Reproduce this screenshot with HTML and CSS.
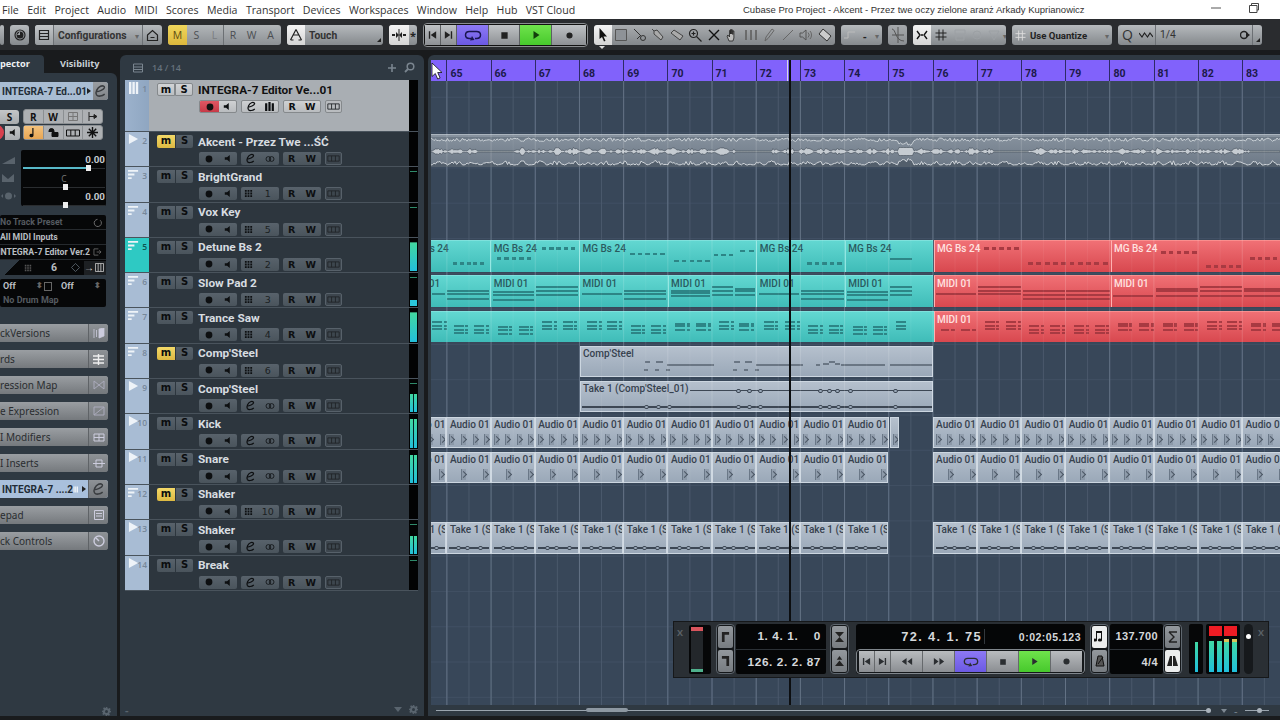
FILE: index.html
```html
<!DOCTYPE html>
<html lang="en">
<head>
<meta charset="utf-8">
<title>Cubase Pro Project</title>
<link rel="stylesheet" href="styles.css">
</head>
<body>
<svg class="defs" width="0" height="0" aria-hidden="true">
  <symbol id="i-rec" viewBox="0 0 10 10"><circle cx="5" cy="5" r="3.4" fill="currentColor"/></symbol>
  <symbol id="i-spk" viewBox="0 0 10 10"><path d="M2 3.5h2.5L7.5 1v8L4.5 6.5H2z" fill="currentColor"/></symbol>
  <symbol id="i-e" viewBox="0 0 10 10"><path d="M1.8 5.6C4 5.4 7.5 4 7.8 2.6 8 1.5 6.4 1 5 1.6 2.8 2.6 1 6 2.2 7.8c1 1.4 3.8 1 5.8-.6" fill="none" stroke="currentColor" stroke-width="1.1"/></symbol>
  <symbol id="i-link" viewBox="0 0 12 10"><circle cx="4" cy="5" r="3" fill="none" stroke="currentColor" stroke-width="1"/><circle cx="8" cy="5" r="3" fill="none" stroke="currentColor" stroke-width="1"/></symbol>
  <symbol id="i-grid" viewBox="0 0 10 10"><path d="M1 1h2v2H1zM4 1h2v2H4zM7 1h2v2H7zM1 4h2v2H1zM4 4h2v2H4zM7 4h2v2H7zM1 7h2v2H1zM4 7h2v2H4zM7 7h2v2H7z" fill="currentColor"/></symbol>
  <symbol id="i-lane" viewBox="0 0 14 8"><path d="M.5 1h13v6H.5zM4.8 1v6M9.2 1v6" fill="none" stroke="currentColor" stroke-width="1"/></symbol>
  <symbol id="i-bars" viewBox="0 0 10 10"><path d="M1 2h2v7H1zM4 1h2v8H4zM7 2h2v7H7z" fill="currentColor"/></symbol>
  <symbol id="i-keys" viewBox="0 0 12 12"><path d="M1 0h2.4v12H1zM4.4 0h2.4v12H4.4zM7.8 0h2.4v12H7.8z" fill="currentColor"/></symbol>
  <symbol id="i-midi" viewBox="0 0 12 12"><path d="M0 1h11v2H0zM0 5h7v2H0zM0 9h4v2H0z" fill="currentColor"/></symbol>
  <symbol id="i-audio" viewBox="0 0 12 12"><path d="M1 0l10 5.500-10 5.500z" fill="currentColor"/></symbol>
  <symbol id="i-gear" viewBox="0 0 12 12"><path d="M5 0h2l.3 1.700 1.400.6L10.200 1.300l1.400 1.400-1 1.500.6 1.400L12 5v2l-1.800.3-.6 1.400 1 1.500-1.400 1.400-1.500-1-1.400.6L7 12H5l-.3-1.800-1.400-.6-1.500 1-1.400-1.400 1-1.500-.6-1.400L0 7V5l1.800-.3.6-1.400-1-1.500L2.800.4l1.500 1 1.400-.6zM6 4a2 2 0 100 4 2 2 0 000-4z" fill="currentColor" fill-rule="evenodd"/></symbol>
  <symbol id="i-loop" viewBox="0 0 18 12"><path d="M7 9.500H5.500C3 9.500 1.500 8 1.500 6S3 2.500 5.500 2.500h7c2.500 0 4 1.500 4 3.500s-1.500 3.500-4 3.500H11" fill="none" stroke="currentColor" stroke-width="1.500"/><path d="M6 11.500l2-4.500 2.500 4z" fill="currentColor"/></symbol>
  <symbol id="i-play" viewBox="0 0 10 10"><path d="M2.500 1l6 4-6 4z" fill="currentColor"/></symbol>
  <symbol id="i-stop" viewBox="0 0 10 10"><path d="M1.500 1.500h7v7h-7z" fill="currentColor"/></symbol>
  <symbol id="i-first" viewBox="0 0 12 10"><path d="M2 1h1.500v8H2zM10 1v8L4 5z" fill="currentColor"/></symbol>
  <symbol id="i-last" viewBox="0 0 12 10"><path d="M8.500 1H10v8H8.500zM2 1v8l6-4z" fill="currentColor"/></symbol>
  <symbol id="i-rew" viewBox="0 0 14 10"><path d="M6.500 1v8L1 5zM13 1v8L7.500 5z" fill="currentColor"/></symbol>
  <symbol id="i-ffw" viewBox="0 0 14 10"><path d="M1 1v8l5.500-4zM7.500 1v8L13 5z" fill="currentColor"/></symbol>
</svg>

<header class="titlebar">
  <nav class="menu"><span>File</span><span>Edit</span><span>Project</span><span>Audio</span><span>MIDI</span><span>Scores</span><span>Media</span><span>Transport</span><span>Devices</span><span>Workspaces</span><span>Window</span><span>Help</span><span>Hub</span><span>VST Cloud</span></nav>
  <div class="doc-title">Cubase Pro Project - Akcent - Przez twe oczy zielone aranż Arkady Kuprianowicz</div>
  <div class="win-ctl">
    <svg width="12" height="12" viewBox="0 0 12 12"><path d="M1 6h10" stroke="#555" fill="none"/></svg>
    <svg width="12" height="12" viewBox="0 0 12 12"><path d="M3.500 3V1.500h7V8H9M1.500 3.500H9v7H1.500z" stroke="#444" fill="none"/></svg>
  </div>
</header>

<section class="toolbar">
  <div class="tg w4"></div>
  <div class="tg w19 ic"><svg width="12" height="12" viewBox="0 0 12 12"><circle cx="6" cy="6" r="5" fill="none" stroke="#222" stroke-width="1.200"/><path d="M6 2.500A3.500 3.500 0 116 9.500 3.500 3.500 0 016 2.500zM6 6v-3.500L3 6z" fill="#222"/></svg></div>
  <div class="tg w127">
    <span class="cell light c19"><svg width="12" height="12" viewBox="0 0 12 12"><path d="M1.500 1.500h9v9h-9zM1.500 4.500h9M1.500 7.500h9" fill="none" stroke="#222" stroke-width="1.200"/></svg></span>
    <span class="tlabel grow">Configurations</span><span class="caret">▾</span>
    <span class="cell c20 sep"><svg width="13" height="13" viewBox="0 0 13 13"><path d="M1.500 6L6.500 1.500 11.500 6v5.500h-10zM4.500 8.500h4" fill="none" stroke="#222" stroke-width="1.200"/></svg></span>
  </div>
  <div class="tg w113 msl">
    <span class="mbtn yel">M</span><span class="mbtn">S</span><span class="mbtn dim">L</span><span class="mbtn sep">R</span><span class="mbtn">W</span><span class="mbtn">A</span>
  </div>
  <div class="tg w96">
    <span class="cell white c18"><svg width="14" height="14" viewBox="0 0 14 14"><path d="M7 1.500L12.500 12M1.500 12L7 1.500M4 7h6M1.500 12h3M9.500 12h3" fill="none" stroke="#222" stroke-width="1.200"/></svg></span>
    <span class="tlabel grow">Touch</span><span class="corner"></span>
  </div>
  <div class="tg w28">
    <span class="cell white c20"><svg width="14" height="12" viewBox="0 0 14 12"><path d="M0 5h3v2H0zM11 5h3v2h-3zM4 3l3 3-3 3zM10 3L7 6l3 3z" fill="#222"/><path d="M7 0v12" stroke="#222"/></svg></span>
    <span class="star">*</span>
  </div>
  <div class="tg w165 tport">
    <span class="tp w16"><svg width="11" height="10"><use href="#i-first"/></svg></span>
    <span class="tp w16"><svg width="11" height="10"><use href="#i-last"/></svg></span>
    <span class="tp w32 purple"><svg width="18" height="12"><use href="#i-loop"/></svg></span>
    <span class="tp w31"><svg width="9" height="9"><use href="#i-stop"/></svg></span>
    <span class="tp w32 green"><svg width="10" height="10"><use href="#i-play"/></svg></span>
    <span class="tp grow"><svg width="9" height="9"><use href="#i-rec"/></svg></span>
  </div>
  <div class="tools-wrap">
    <div class="tg w241 tools">
      <span class="tool white wsel"><svg width="10" height="14" viewBox="0 0 10 14"><path d="M1.500 0v11l2.500-2 2 4.500 1.500-.7L5.500 8.500H9z" fill="#111"/></svg></span>
      <span class="tool"><svg width="14" height="14" viewBox="0 0 14 14"><path d="M1.500 1.500h11v11h-11z" fill="#8e9297" stroke="#555"/></svg></span>
      <span class="tool"><svg width="14" height="14" viewBox="0 0 14 14"><path d="M1 1l7 7M4 11L8 7" stroke="#333" fill="none"/><circle cx="10" cy="10" r="2.500" fill="none" stroke="#333"/></svg></span>
      <span class="tool"><svg width="14" height="14" viewBox="0 0 14 14"><path d="M1 1l2 2M3 3l3-1 6 7-2 3-7-6z" fill="#aaa" stroke="#444"/></svg></span>
      <span class="tool"><svg width="14" height="14" viewBox="0 0 14 14"><path d="M1 5l3-3 9 6-3 4z" fill="#aaa" stroke="#444"/></svg></span>
      <span class="tool"><svg width="14" height="14" viewBox="0 0 14 14"><circle cx="5.500" cy="5.500" r="4" fill="none" stroke="#222" stroke-width="1.200"/><path d="M8.500 8.500l5 5M3.500 5.500h4M5.500 3.500v4" stroke="#222" stroke-width="1.200" fill="none"/></svg></span>
      <span class="tool"><svg width="12" height="12" viewBox="0 0 12 12"><path d="M1 1l10 10M11 1L1 11" stroke="#111" stroke-width="1.400" fill="none"/></svg></span>
      <span class="tool"><svg width="14" height="14" viewBox="0 0 14 14"><path d="M4 13L2 8l1-1 1.500 2V2.500l1 0V6V1.500l1.200 0V6l0-4h1.100v4.500V3h1.100v6l0 1-1 3z" fill="#bbb" stroke="#222" stroke-width=".8"/></svg></span>
      <span class="tool"><svg width="14" height="12" viewBox="0 0 14 12"><path d="M2 1v10M7 1v10M12 1v10" stroke="#666" stroke-width="1.800"/></svg></span>
      <span class="tool"><svg width="12" height="14" viewBox="0 0 12 14"><path d="M2 13l1-4 6-8 2 1.500-6 8z" fill="none" stroke="#666"/></svg></span>
      <span class="tool"><svg width="12" height="12" viewBox="0 0 12 12"><path d="M1 11L11 1" stroke="#666" fill="none"/></svg></span>
      <span class="tool"><svg width="14" height="12" viewBox="0 0 14 12"><path d="M1 4h2.500L7 1v10L3.500 8H1z" fill="none" stroke="#555"/><path d="M9 3.500a3.500 3.500 0 010 5M11 2a6 6 0 010 8" stroke="#666" fill="none"/></svg></span>
      <span class="tool"><svg width="14" height="14" viewBox="0 0 14 14"><path d="M1 6l4-5 8 7-4 5z" fill="#ccc" stroke="#333"/></svg></span>
    </div>
    <span class="sel-tri"></span>
  </div>
  <div class="tg w41 dimgrp"><svg width="14" height="10" viewBox="0 0 14 10"><path d="M0 8h4V2h7" stroke="#bbb" fill="none"/></svg><span class="dash">-</span><span class="caret">▾</span></div>
  <div class="tg w19 ic lite"><svg width="14" height="18" viewBox="0 0 14 18"><path d="M1 3c4 0 3 12 12 12M1 9h12M7 1v16" stroke="#555" fill="none"/></svg></div>
  <div class="tg w93 snap">
    <span class="cell white c18"><svg width="12" height="10" viewBox="0 0 12 10"><path d="M1 1l3 4-3 4M11 1L8 5l3 4M5 5h2" stroke="#111" stroke-width="1.400" fill="none"/></svg></span>
    <span class="cell c20"><svg width="12" height="12" viewBox="0 0 12 12"><path d="M4 .5v11M8 .5v11M.5 4h11M.5 8h11" stroke="#222" fill="none"/></svg></span>
    <span class="cell c17 faint"><svg width="12" height="12" viewBox="0 0 12 12"><path d="M1 1h10v4H1zM2 7h8v4H2z" stroke="#9ca0a4" fill="none"/></svg></span>
    <span class="cell c17 faint"><svg width="12" height="12" viewBox="0 0 12 12"><circle cx="6" cy="6" r="4" stroke="#9ca0a4" fill="none"/></svg></span>
    <span class="cell c17 faint"><svg width="12" height="12" viewBox="0 0 12 12"><path d="M1 2h10L6 11z" stroke="#9ca0a4" fill="none"/></svg></span>
    <span class="caret">▾</span>
  </div>
  <div class="tg w100 quant">
    <span class="cell c17"><svg width="11" height="11" viewBox="0 0 12 12"><path d="M4 .5v11M8 .5v11M.5 4h11M.5 8h11" stroke="#ddd" fill="none"/></svg></span>
    <span class="tlabel grow dark">Use Quantize</span><span class="caret">▾</span>
  </div>
  <div class="tg quant2">
    <span class="qq">Q</span>
    <svg class="qwave" width="14" height="8" viewBox="0 0 14 8"><path d="M0 2l3 4 2.500-4 3 4 2.500-4L14 6" stroke="#222" stroke-width="1.200" fill="none"/></svg>
    <span class="tlabel grow q14">1/4</span>
    <svg width="10" height="10" viewBox="0 0 10 10"><circle cx="4" cy="5" r="3.500" fill="none" stroke="#222" stroke-width="1.400"/><path d="M6 2l4 3-4 3z" fill="#222"/></svg>
    <span class="qcorner"><span class="corner"></span></span>
  </div>
</section>

<main class="main">
  <aside class="inspector">
    <div class="tabs"><span class="tab active">pector</span><span class="tab">Visibility</span></div>
    <div class="ins-body">
      <div class="ins-head"><span class="ins-title">INTEGRA-7 Ed...01</span><span class="tri-r"></span><span class="ins-e"><svg width="15" height="14"><use href="#i-e"/></svg></span></div>
      <div class="ins-row r1">
        <span class="ibtn s-btn">S</span>
        <span class="igroup"><span class="ib">R</span><span class="ib">W</span><span class="ib mute"><svg width="10" height="9" viewBox="0 0 10 9"><path d="M.5.5h9v8h-9zM5 .5v8M.5 4.500h9" stroke="#777" fill="none"/></svg></span><span class="ib"><svg width="10" height="9" viewBox="0 0 10 9"><path d="M1 0v9M1 4.500h5M6 2.500l3 2-3 2z" stroke="#222" fill="#222"/></svg></span></span>
      </div>
      <div class="ins-row r2">
        <span class="ired"></span>
        <span class="ibtn spk"><svg width="9" height="9"><use href="#i-spk"/></svg></span>
        <span class="igroup"><span class="ib or"><svg width="10" height="11" viewBox="0 0 10 11"><path d="M5.500 1v7.500a2 1.700 0 11-1.200-1.500V1z" fill="#111"/></svg></span><span class="ib"><svg width="11" height="9" viewBox="0 0 11 9"><path d="M1 4V3a2.500 2.500 0 015 0v1M4 4.500h6v4H4z" stroke="#111" fill="#111"/></svg></span><span class="ib"><svg width="14" height="8"><use href="#i-lane"/></svg></span><span class="ib"><svg width="11" height="11" viewBox="0 0 11 11"><path d="M5.500 0v11M0 5.500h11M1.800 1.800l7.400 7.400M9.200 1.800L1.800 9.200" stroke="#111" stroke-width="1.400"/></svg></span></span>
      </div>
      <div class="ins-mix">
        <div class="mix-side">
          <svg width="15" height="8" viewBox="0 0 15 8"><path d="M1 8L14 1v7z" fill="#59636c"/></svg>
          <svg width="15" height="8" viewBox="0 0 15 8"><path d="M1 0l6 5 6-5v8H1z" fill="#59636c"/></svg>
          <svg width="15" height="8" viewBox="0 0 15 8"><circle cx="7.500" cy="4" r="3.500" fill="#59636c"/><path d="M0 4l2-2v4zM15 4l-2-2v4z" fill="#59636c"/></svg>
        </div>
        <div class="mix-box">
          <div class="mix-val">0.00</div>
          <div class="slider"><span class="fill"></span><span class="handle h-a"></span></div>
          <div class="mix-c">C</div>
          <div class="slider s-mid"><span class="handle h-c"></span></div>
          <div class="mix-val">0.00</div>
          <div class="slider"><span class="handle h-c"></span></div>
        </div>
      </div>
      <div class="preset">
        <div class="p-line dimtxt">No Track Preset<svg width="9" height="9" viewBox="0 0 10 10"><path d="M8 2.500a4 4 0 11-3-1" stroke="#777" fill="none"/></svg></div>
        <div class="p-line">All MIDI Inputs</div>
        <div class="p-line cutl">INTEGRA-7 Editor Ver.2<svg width="9" height="8" viewBox="0 0 10 9"><path d="M6 1H1v7h5M4 4.500h5M7 2.500l2 2-2 2" stroke="#666" fill="none"/></svg></div>
        <div class="p-chan">
          <svg class="pc-g" width="8" height="8"><use href="#i-grid"/></svg><span class="pc-n">6</span><svg width="9" height="9" viewBox="0 0 10 10"><path d="M5 .5L9.500 5 5 9.500.500 5z" stroke="#59636c" fill="none"/></svg>
          <span class="pc-k">→<svg width="9" height="9" viewBox="0 0 10 10"><path d="M.5.5h9v9h-9zM3.500.5v9M6.500.5v9" stroke="#bbb" fill="none"/></svg></span>
        </div>
      </div>
      <div class="drum">
        <div class="d-line"><span class="off">Off</span><span class="updn">⬍</span><span class="dicon"></span><span class="off o2">Off</span><span class="updn">⬍</span></div>
        <div class="d-line dimtxt">No Drum Map</div>
      </div>
      <div class="sections">
        <div class="sec"><span class="sec-t">ckVersions</span><span class="sec-i"><svg width="12" height="11" viewBox="0 0 12 11"><path d="M1 1v9M3.500 2v7M6 1v9l5-2V0z" stroke="#ccd" fill="#ccd" stroke-width=".8"/></svg></span></div>
        <div class="sec"><span class="sec-t">rds</span><span class="sec-i"><svg width="11" height="11" viewBox="0 0 11 11"><path d="M0 2h11M0 5.500h11M0 9h11M5.500 0v11" stroke="#eee" stroke-width="1.400"/></svg></span></div>
        <div class="sec"><span class="sec-t">ression Map</span><span class="sec-i"><svg width="12" height="10" viewBox="0 0 12 10"><path d="M1 1l5 4-5 4zM11 1L6 5l5 4z" stroke="#aab" fill="none"/></svg></span></div>
        <div class="sec"><span class="sec-t">e Expression</span><span class="sec-i"><svg width="12" height="10" viewBox="0 0 12 10"><path d="M1 1h10v8H1zM1 9l10-8" stroke="#aab" fill="none"/></svg></span></div>
        <div class="sec"><span class="sec-t">I Modifiers</span><span class="sec-i"><svg width="12" height="9" viewBox="0 0 12 9"><path d="M1 1h10v7H1zM1 4.500h10M6 1v7" stroke="#ccd" fill="none"/></svg></span></div>
        <div class="sec"><span class="sec-t">I Inserts</span><span class="sec-i"><svg width="12" height="9" viewBox="0 0 12 9"><path d="M3 1h6v7H3zM0 4.500h12" stroke="#ccd" fill="none"/></svg></span></div>
        <div class="sec inst"><span class="sec-t">INTEGRA-7 ....2</span><svg class="kbd" width="8" height="11"><use href="#i-keys"/></svg><span class="tri-r"></span><span class="sec-i"><svg width="15" height="14"><use href="#i-e"/></svg></span></div>
        <div class="sec"><span class="sec-t">epad</span><span class="sec-i"><svg width="10" height="10" viewBox="0 0 10 10"><path d="M.5.5h9v9h-9zM2 3.500h6M2 6h6" stroke="#ccd" fill="none"/></svg></span></div>
        <div class="sec"><span class="sec-t">ck Controls</span><span class="sec-i"><svg width="12" height="12" viewBox="0 0 12 12"><circle cx="6" cy="6" r="5" stroke="#ccd" stroke-width="1.400" fill="none"/><path d="M3 3l3 3" stroke="#ccd" stroke-width="1.400"/></svg></span></div>
      </div>
      <svg class="gear g1" width="9" height="9"><use href="#i-gear"/></svg>
    </div>
  </aside>

  <section class="tracklist">
    <div class="tl-head">
      <svg width="10" height="10" viewBox="0 0 10 10"><path d="M.5 1h9v8h-9zM.5 4h9M.5 6.500h9" fill="none" stroke="#7a858f"/></svg>
      <span class="tl-count">14 / 14</span>
      <svg class="tl-plus" width="8" height="8" viewBox="0 0 8 8"><path d="M4 0v8M0 4h8" stroke="#7a858f" stroke-width="1.600"/></svg>
      <svg width="11" height="11" viewBox="0 0 11 11"><circle cx="6.500" cy="4.500" r="3.300" fill="none" stroke="#7a858f" stroke-width="1.500"/><path d="M4 7L1 10" stroke="#7a858f" stroke-width="1.800"/></svg>
    </div>
    <div class="tracks" id="tracks"></div>
    <div class="tl-foot"><span class="tl-dash">-</span><span class="tl-tri"></span><svg width="9" height="9"><use href="#i-gear"/></svg></div>
  </section>

  <section class="arrange">
    <div class="ruler" id="ruler"></div>
    <div class="lanes" id="lanes">
      <div class="grid-over"></div>
    </div>
    <div class="hscroll"><span class="sc-line"></span><span class="sc-thumb"></span><span class="sc-dot d1"></span><span class="sc-tri"></span><span class="sc-dash">-</span><span class="sc-line l2"></span><span class="sc-dot d2"></span></div>
    <div class="cursor"></div>
    <svg class="mouse" width="12" height="18" viewBox="0 0 12 18"><path d="M1 1v13.500l3.300-3 2.400 5.500 2.400-1-2.400-5.500H11z" fill="#fff" stroke="#111" stroke-width=".8"/></svg>
  </section>
</main>

<div class="transport">
  <span class="tx">X</span>
  <div class="t-meter"><span class="tm-red"></span><span class="tm-green"></span></div>
  <div class="t-stack s1"><span class="tb"><svg width="9" height="10" viewBox="0 0 10 11"><path d="M1 0h8v3H4v8H1z" fill="#222"/></svg></span><span class="tb"><svg width="9" height="10" viewBox="0 0 10 11"><path d="M1 0h8v11H6V3H1z" fill="#222"/></svg></span></div>
  <div class="t-disp d-loc"><div class="t-line">1. 4. 1.&nbsp;&nbsp;&nbsp;&nbsp;0</div><div class="t-line">126. 2. 2. 87</div></div>
  <div class="t-stack s2"><span class="tb"><svg width="9" height="10" viewBox="0 0 10 11"><path d="M0 0h10L5 5.500 10 11H0l5-5.500z" fill="#222"/></svg></span><span class="tb"><svg width="9" height="10" viewBox="0 0 10 11"><path d="M5 0l3 4H2zM0 11l5-6 5 6z" fill="#222"/></svg></span></div>
  <div class="t-main">
    <div class="t-top"><span class="t-pos">72. 4. 1. 75</span><span class="t-time">0:02:05.123</span></div>
    <div class="t-btns">
      <span class="tbt b16"><svg width="11" height="9"><use href="#i-first"/></svg></span>
      <span class="tbt b16"><svg width="11" height="9"><use href="#i-last"/></svg></span>
      <span class="tbt b32"><svg width="12" height="9"><use href="#i-rew"/></svg></span>
      <span class="tbt b32"><svg width="12" height="9"><use href="#i-ffw"/></svg></span>
      <span class="tbt b32 purple"><svg width="16" height="11"><use href="#i-loop"/></svg></span>
      <span class="tbt b32"><svg width="8" height="8"><use href="#i-stop"/></svg></span>
      <span class="tbt b32 green"><svg width="9" height="9"><use href="#i-play"/></svg></span>
      <span class="tbt b32"><svg width="9" height="9"><use href="#i-rec"/></svg></span>
    </div>
  </div>
  <div class="t-stack s3"><span class="tb on"><svg width="11" height="14" viewBox="0 0 11 14"><path d="M3 1v9a2 1.500 0 11-1-1.200V1zM8 1v9a2 1.500 0 11-1-1.200V1zM3 1h5v2H3z" fill="#111"/></svg></span><span class="tb"><svg width="10" height="12" viewBox="0 0 10 12"><path d="M3 1h4l2 10H1zM3 9l5-7" stroke="#111" fill="#555"/></svg></span></div>
  <div class="t-disp d-tempo"><div class="t-line">137.700</div><div class="t-line">4/4</div></div>
  <div class="t-stack s4"><span class="tb"><svg width="10" height="12" viewBox="0 0 10 12"><path d="M1 1h8M1 11h8M1 1l5 5-5 5" stroke="#222" stroke-width="1.400" fill="none"/></svg></span><span class="tb on"><svg width="11" height="10" viewBox="0 0 11 10"><path d="M3 0h5l3 10H0z" fill="#222"/><path d="M5.500 0v10" stroke="#eee"/></svg></span></div>
  <div class="t-m2"><span class="bar"></span></div>
  <div class="t-m3">
    <div class="m3-ch"><span class="m3-red"></span><span class="m3-bars"><i></i><i></i></span></div>
    <div class="m3-ch"><span class="m3-red"></span><span class="m3-bars hi"><i></i><i></i></span></div>
  </div>
  <div class="t-knob"><span></span></div>
  <span class="tx x2">X</span>
</div>
<script src="script.js"></script>
</body>
</html>
```
FILE: styles.css
```css
* { box-sizing: border-box; }
html, body { margin: 0; padding: 0; }
body {
  width: 1280px; height: 720px; overflow: hidden; position: relative;
  background: #191b1d; font-family: "Open Sans", "Noto Sans", sans-serif; font-size: 11px; color: #222;
}
.defs { position: absolute; }
.grow { flex: 1; }

/* title bar */
.titlebar { height: 19px; background: #fff; position: relative; display: flex; align-items: center; }
.menu { display: flex; padding-left: 2px; font-size: 10.6px; color: #333; }
.menu span { margin-right: 8.400px; white-space: nowrap; }
.doc-title { position: absolute; left: 743px; top: 3px; font-family: "Liberation Sans", sans-serif; font-size: 9.500px; line-height: 13px; color: #333; white-space: nowrap; }
.win-ctl { position: absolute; left: 1210px; top: 2px; display: flex; gap: 26px; }

/* toolbar */
.toolbar { height: 31px; background: #2a2c2f; display: flex; gap: 6px; align-items: center; padding-top: 1px; }
.tg { height: 20px; display: flex; align-items: center; border-radius: 3px; background: linear-gradient(#b6babd, #85898d); flex: none; overflow: hidden; }
.ic { justify-content: center; }
.w4 { width: 4px; } .w19 { width: 19px; } .w127 { width: 127px; } .w113 { width: 113px; } .w96 { width: 96px; }
.w28 { width: 28px; } .w165 { width: 165px; } .w241 { width: 241px; } .w41 { width: 41px; } .w93 { width: 93px; } .w100 { width: 100px; }
.cell { height: 100%; display: flex; align-items: center; justify-content: center; flex: none; }
.c17 { width: 17px; } .c18 { width: 18px; } .c19 { width: 19px; } .c20 { width: 20px; }
.sep { border-left: 1px solid #6c7074; }
.light { background: linear-gradient(#c4c7ca, #999da0); border-right: 1px solid #6c7074; }
.white { background: linear-gradient(#f4f4f4, #d4d4d4); }
.tlabel { font-family: Roboto, sans-serif; font-weight: 700; font-size: 10.300px; padding-left: 4px; color: #333; white-space: nowrap; }
.tlabel.dark { color: #222; font-size: 9.600px; padding-left: 1px; }
.caret { font-size: 8px; color: #666; padding: 0 3px; }
.corner { width: 0; height: 0; border-style: solid; border-width: 0 0 4px 4px; border-color: transparent transparent #222 transparent; align-self: flex-end; margin: 0 2px 3px 0; }
.star { flex: 1; text-align: center; font-size: 11px; font-weight: 700; color: #222; }
.msl { background: linear-gradient(#b2b6b9, #8c9094); }
.mbtn { width: 19px; height: 100%; text-align: center; line-height: 20px; font-size: 10.5px; color: #4b4e52; flex: none; }
.mbtn.yel { background: linear-gradient(#f0d65c, #dcb73c); color: #5c4a10; }
.mbtn.dim { color: #7a7d80; width: 17px; }
.tport { height: 24px; background: #111; border: 1px solid #8a8d90; border-radius: 4px; padding: 1px; gap: 0; }
.tp { height: 100%; display: flex; align-items: center; justify-content: center; flex: none; background: linear-gradient(#bfc2c5, #8d9094); color: #222; border-right: 1px solid #5c5f62; }
.tp.grow { flex: 1; border-right: 0; }
.w16 { width: 16px; } .w31 { width: 31px; } .w32 { width: 32px; }
.purple { background: linear-gradient(#8d79f5, #6b59e3) !important; color: #1a1650; }
.green { background: linear-gradient(#6fe34c, #47c92c) !important; color: #123f0c; }
.tools-wrap { position: relative; flex: none; }
.sel-tri { position: absolute; left: 5px; top: 21px; border-style: solid; border-width: 3px 3px 0 3px; border-color: #ddd transparent transparent transparent; }
.tools { background: linear-gradient(#a9acaf, #83878b); }
.tool { width: 18.500px; height: 100%; display: flex; align-items: center; justify-content: center; flex: none; }
.tool.wsel { width: 18px; border-radius: 3px 0 0 3px; }
.dimgrp { gap: 5px; padding-left: 3px; }
.dash { font-weight: 700; color: #222; }
.lite { background: linear-gradient(#a6a9ac, #8a8d91); }
.snap .caret { padding: 0 1px; }
.quant .c17 { background: transparent; }
.quant2 { width: 144px; padding-left: 4px; }
.qq { font-size: 14px; color: #333; line-height: 20px; width: 17px; }
.qwave { margin-right: 2px; }
.q14 { padding-left: 4px; color: #333; font-weight: 400; border-left: 1px solid #6c7074; height: 100%; line-height: 20px; }
.qcorner { width: 10px; height: 100%; margin-left: 2px; border-left: 1px solid #6c7074; display: flex; justify-content: flex-end; }

/* main panels */
.main { height: 670px; display: flex; padding-top: 5px; position: relative; }

/* inspector */
.inspector { width: 117px; flex: none; display: flex; flex-direction: column; position: relative; }
.tabs { display: flex; height: 18px; font-weight: 700; font-size: 9.200px; color: #c9d0d6; line-height: 18px; }
.tab.active { width: 44px; background: #2f3942; color: #eef1f3; border-radius: 0 4px 0 0; }
.tab + .tab { margin-left: 16px; }
.ins-body { flex: 1; background: #2f3942; border-radius: 0 6px 0 0; position: relative; padding-top: 9px; height: 643px; margin-bottom: 4px; }
.ins-head { width: 108px; height: 18px; display: flex; align-items: center; background: #a9bdd3; border-radius: 0 3px 3px 0; position: relative; }
.ins-title { font-family: Roboto, sans-serif; font-weight: 700; font-size: 10px; color: #222c36; padding-left: 2px; flex: 1; white-space: nowrap; }
.tri-r { width: 0; height: 0; border-style: solid; border-width: 3px 0 3px 4px; border-color: transparent transparent transparent #222; margin-right: 2px; }
.ins-e { width: 20px; height: 100%; background: linear-gradient(#9a9ea2, #7e8286); display: flex; align-items: center; justify-content: center; color: #3a3d40; border-radius: 0 3px 3px 0; }
.ins-row { display: flex; height: 15px; margin-top: 1px; align-items: center; width: 108px; position: relative; }
.r1 { margin-top: 9px; }
.ibtn { height: 14px; width: 19px; background: linear-gradient(#c4c6c8, #a8abae); border-radius: 0 3px 3px 0; display: flex; align-items: center; justify-content: center; font-weight: 700; color: #111; font-size: 10px; }
.s-btn { margin-right: 4px; }
.spk { width: 15px; margin-left: 5px; margin-right: 3px; }
.ired { position: absolute; left: -4px; top: 0; width: 8px; height: 15px; background: #d8404e; border-radius: 0 8px 8px 0; }
.igroup { width: 80px; height: 15px; background: #adb0b3; border: 1px solid #8b8f92; border-radius: 3px; display: flex; }
.ib { flex: 1; display: flex; align-items: center; justify-content: center; font-size: 10px; font-weight: 700; color: #111; border-right: 1px solid #8b8f92; }
.ib:last-child { border-right: 0; }
.ib.or { background: linear-gradient(#f4c27c, #e7a654); }
.ins-mix { display: flex; margin-top: 10px; height: 56px; }
.mix-side { width: 21px; flex: none; display: flex; flex-direction: column; padding: 6px 0 0 1px; gap: 10px; }
.mix-box { width: 85px; background: #060708; border-radius: 2px; padding: 5px 1px 0 2px; }
.mix-val { height: 10px; line-height: 10px; text-align: right; font-family: Roboto, sans-serif; font-size: 9.800px; font-weight: 700; color: #c4c9cd; }
.mix-c { height: 10px; line-height: 10px; text-align: center; font-size: 8.500px; color: #777; }
.slider { height: 9px; position: relative; }
.s-mid { height: 8px; }
.slider::before { content: ""; position: absolute; left: 0; right: 0; top: 3px; height: 1px; background: #2a2d30; }
.fill { position: absolute; left: 0; top: 2px; height: 2px; width: 64px; background: #58b9c9; }
.handle { position: absolute; top: 0; width: 5px; height: 6px; background: #eee; }
.h-a { left: 63px; } .h-c { left: 40px; }
.preset { width: 106px; height: 60px; background: #060708; border-radius: 2px; margin-top: 9px; font-family: Roboto, sans-serif; font-size: 8.700px; font-weight: 700; color: #b9bec2; position: relative; }
.p-line { height: 15px; line-height: 14px; display: flex; justify-content: space-between; align-items: center; padding: 0 4px 0 0; border-bottom: 1px solid #262a2e; white-space: nowrap; }
.dimtxt { color: #555b61; }
.cutl { margin-left: -2px; }
.p-chan { height: 15px; display: flex; align-items: center; padding-left: 24px; background: linear-gradient(135deg, #2f3942 0 14px, #060708 14px); color: #b9bec2; font-size: 10.500px; }
.pc-g { margin-right: 19px; color: #555; }
.pc-n { margin-right: 14px; }
.pc-k { margin-left: auto; width: 22px; display: flex; align-items: center; gap: 1px; background: #1d2023; color: #ddd; height: 14px; font-size: 10px; }
.drum { width: 106px; height: 28px; background: #060708; border-radius: 2px; margin-top: 4px; font-family: Roboto, sans-serif; font-size: 9px; font-weight: 700; color: #b9bec2; }
.d-line { height: 14px; line-height: 14px; display: flex; align-items: center; padding-left: 3px; white-space: nowrap; }
.off { width: 33px; }
.o2 { width: 33px; margin-left: 9px; }
.updn { font-size: 8px; color: #666; width: 7px; }
.dicon { width: 8px; height: 9px; border: 1px solid #666; margin-left: 1px; }
.sections { margin-top: 17px; display: flex; flex-direction: column; gap: 8px; }
.sec { width: 108px; height: 18px; display: flex; align-items: center; background: linear-gradient(#9a9ea2, #75797d); border-radius: 0 3px 3px 0; overflow: hidden; }
.sec-t { flex: 1; font-size: 10px; color: #2a2d30; white-space: nowrap; font-family: "Noto Sans", sans-serif; }
.sec-i { width: 20px; height: 100%; flex: none; display: flex; align-items: center; justify-content: center; border-left: 1px solid #5f6367; background: linear-gradient(#8e9296, #74787c); color: #3a3d40; }
.sec.inst { background: #a9c0dc; }
.inst .sec-t { font-family: Roboto, sans-serif; font-weight: 700; color: #222c36; padding-left: 2px; }
.kbd { color: #eef3f8; margin-right: 3px; }
.gear { position: absolute; color: #59646e; }
.g1 { left: 102px; bottom: 0; }

/* track list */
.tracklist { width: 304px; margin-left: 3px; flex: none; background: #2f3942; border-radius: 6px 6px 0 0; margin-bottom: 4px; display: flex; flex-direction: column; padding: 0 5px; position: relative; height: 661px; }
.tl-head { height: 25px; display: flex; align-items: center; padding: 0 4px 0 8px; flex: none; }
.tl-count { font-size: 9px; color: #66727c; font-weight: 600; margin-left: 9px; flex: 1; }
.tl-plus { margin-right: 8px; }
.tracks { display: flex; flex-direction: column; width: 293px; }
.track { height: 35.300px; display: flex; flex: none; background: #2d363e; border-bottom: 1px solid #49535c; }
.track.sel { height: 52px; background: #a9aeb3; }
.strip { width: 24px; flex: none; background: #a8bcd4; position: relative; }
.sel .strip { background: linear-gradient(90deg, #9cb2cc, #8fa6c1); }
.strip.cy { background: #2ec9c3; }
.strip svg { position: absolute; left: 3px; top: 2px; color: #eef3f8; }
.num { position: absolute; right: 2px; top: 3px; font-size: 8.500px; color: #76879a; font-weight: 600; }
.strip.cy .num { color: #0c5552; }
.tbody { flex: 1; position: relative; padding-top: 3px; }
.r-a { display: flex; height: 13px; padding-left: 8px; align-items: center; }
.ms { width: 18px; height: 13px; background: linear-gradient(#58626b, #4a545c); color: #0b0d0f; text-align: center; font-weight: 700; font-size: 10px; line-height: 12px; border-radius: 2px 0 0 2px; font-family: "DejaVu Sans", sans-serif; }
.ms + .ms { border-radius: 0 2px 2px 0; border-left: 1px solid #2d363e; }
.ms.yel { background: linear-gradient(#f3d968, #ddb942); }
.name { margin-left: 5px; font-family: Roboto, sans-serif; font-weight: 700; font-size: 11.800px; color: #d7dce0; white-space: nowrap; }
.r-b { display: flex; padding-left: 50px; margin-top: 4px; height: 13px; gap: 4px; }
.g { height: 13px; background: linear-gradient(#58626b, #4a545c); border-radius: 2px; display: flex; align-items: center; justify-content: space-around; color: #0d0f11; font-weight: 700; font-size: 9.500px; width: 38px; flex: none; font-family: "DejaVu Sans", sans-serif; }
.g.lane { width: 17px; color: #202427; background: #3d464e; border: 1px solid #57616a; }
.g .n { color: #1b1f22; font-weight: 400; font-size: 9.500px; width: 16px; text-align: center; }
.sel .ms { background: linear-gradient(#d2d4d6, #bcbfc2); border: 1px solid #85898c; }
.sel .name { color: #111; }
.sel .g { background: linear-gradient(#cfd1d3, #b9bcbf); border: 1px solid #85898c; }
.sel .g.lane { background: #b9bcbf; }
.sel .g.rr { position: relative; overflow: hidden; justify-content: flex-end; padding-right: 5px; }
.sel .g.rr::before { content: ""; position: absolute; left: 0; top: 0; bottom: 0; width: 19px; background: linear-gradient(#e05763, #c73a48); }
.sel .g.rr svg:first-child { position: absolute; left: 5px; top: 1px; color: #111; }
.meter { width: 9px; flex: none; background: #020303; position: relative; }
.mt-tick { position: absolute; left: 1px; right: 1px; top: 4px; height: 1px; background: #2f8a6a; }
.mt-fill { position: absolute; left: 1px; right: 1px; bottom: 1px; background: linear-gradient(#42d8a0, #22bfdb); }
.mt-fill.full { top: 5px; }
.mt-fill.small { height: 6px; background: #2bc8dc; }
.mt-fill.half { height: 18px; }
.mt-fill.dbl::after { content: ""; position: absolute; left: 3px; width: 1px; top: 0; bottom: 0; background: #042024; }
.tl-foot { position: absolute; left: 5px; right: 6px; bottom: 1px; height: 12px; display: flex; align-items: center; gap: 7px; color: #59646e; }
.tl-dash { flex: 1; font-weight: 700; }
.tl-tri { width: 0; height: 0; border-style: solid; border-width: 5px 4px 0 4px; border-color: #59646e transparent transparent transparent; }

/* arrange */
.arrange { flex: 1; margin-left: 4px; background: #2f3942; border-radius: 6px 0 0 0; padding: 5px 0 0 3px; display: flex; flex-direction: column; position: relative; overflow: hidden; margin-bottom: 4px; }
.ruler { height: 21px; background: #8162fb; position: relative; flex: none; overflow: hidden; }
.bar-l { position: absolute; top: 0; bottom: 0; width: 1px; background: #2e2a66; }
.bar-n { position: absolute; top: 7px; font-family: Roboto, sans-serif; font-size: 10.500px; font-weight: 700; color: #1c1a4a; }
.lanes {
  flex: 1; position: relative; overflow: hidden; background-color: #384759;
  background-image: linear-gradient(90deg, #485a70 1px, transparent 1px), linear-gradient(90deg, #404f63 1px, transparent 1px), linear-gradient(#404f63 1px, transparent 1px);
  background-size: 44.200px 100%, 22.100px 100%, 100% 35.300px;
  background-position: 15.400px 0, 15.400px 0, 0 15.800px;
}
.grid-over {
  position: absolute; inset: 0; z-index: 5;
  background-image: linear-gradient(90deg, rgba(255,255,255,.1) 1px, transparent 1px), linear-gradient(90deg, rgba(255,255,255,.05) 1px, transparent 1px);
  background-size: 44.200px 100%, 22.100px 100%;
  background-position: 15.400px 0, 15.400px 0;
}
.ev { position: absolute; overflow: hidden; }
.ev-t { position: absolute; left: 2.500px; top: 2px; font-family: Roboto, sans-serif; font-size: 10px; font-weight: 500; white-space: nowrap; z-index: 2; }
.ev.teal { background: linear-gradient(#62d7d1, #3fbcb8); border-left: 1px solid #8fe6e1; border-top: 1px solid #7ee1dc; }
.teal .ev-t { color: #2a5a5e; }
.ev.red { background: linear-gradient(#f07075, #d8484f); border-left: 1px solid #ffb1b1; border-top: 1px solid #f98e8e; }
.red .ev-t { color: #ffe2e0; }
.ev.gray { background: linear-gradient(#b5c0cd, #9aa8b8); border: 1px solid #ccd6e0; }
.gray .ev-t { color: #36414e; top: 1px; }
.ev.wave { background: linear-gradient(#87929e, #6c7886); border-top: 1px solid #aab4be; }
.ev svg { position: absolute; left: 0; top: 0; }
.nt { position: absolute; z-index: 1; }
.teal .nt { background: #2d8586; }
.red .nt { background: #a83a42; }
.gray .nt { background: #6a7684; }
.ln { position: absolute; background: #3d4754; height: 1px; }
.dm { position: absolute; width: 5px; height: 4px; border: 1px solid #3d4754; border-radius: 2px; background: #9aa8b8; }
.mk { position: absolute; background: rgba(86,100,116,.25); border-left: 1px solid rgba(70,84,100,.5); }
.mk::after { content: ""; position: absolute; left: -1px; top: 3px; width: 4px; height: 4px; border-top: 1px solid #4a5664; border-right: 1px solid #4a5664; transform: rotate(45deg); }
.hscroll { height: 11px; flex: none; position: relative; background: #2f3942; }
.sc-line { position: absolute; left: 5px; right: 72px; top: 5px; height: 1px; background: #9aa5af; }
.sc-line.l2 { left: 814px; right: 11px; }
.sc-thumb { position: absolute; left: 155px; width: 42px; top: 3px; height: 4px; background: #8d98a2; border-radius: 2px; }
.sc-dot { position: absolute; top: 3px; width: 5px; height: 5px; background: #aab3bc; border-radius: 50%; }
.d1 { left: 775px; } .d2 { left: 826px; }
.sc-tri { position: absolute; left: 790px; top: 4px; border-style: solid; border-width: 4px 3px 0 3px; border-color: #7d8892 transparent transparent transparent; }
.sc-dash { position: absolute; left: 803px; top: -2px; color: #7d8892; }
.cursor { position: absolute; left: 361px; top: 5px; bottom: 11px; width: 2px; background: #0c0e10; z-index: 8; }
.cursor::before { content: ""; position: absolute; left: -2px; top: 0; width: 1px; height: 21px; background: #d6d6dc; }
.mouse { position: absolute; left: 3px; top: 7px; z-index: 9; }

/* transport */
.transport { position: absolute; left: 673px; top: 621px; width: 596px; height: 57px; background: #2a2f34; border: 1px solid #16181a; display: flex; padding: 2px 0 3px; z-index: 20; color: #d5d8db; font-weight: 600; }
.tx { width: 15px; flex: none; font-size: 9px; color: #5a6167; padding: 2px 0 0 3px; font-weight: 700; }
.t-meter { width: 22px; flex: none; background: #060708; border-radius: 2px; position: relative; margin-top: 1px; }
.t-meter::before { content: ""; position: absolute; left: 2px; right: 8px; top: 2px; bottom: 2px; background: #23272b; }
.tm-red { position: absolute; left: 2px; right: 8px; top: 2px; height: 4px; background: #d8545c; }
.tm-green { position: absolute; left: 2px; right: 8px; bottom: 2px; height: 3px; background: #4fb08c; }
.t-stack { width: 19px; flex: none; border: 1px solid #5f676f; border-radius: 4px; display: flex; flex-direction: column; gap: 2px; padding: 1px; background: #14171a; }
.tb { flex: 1; background: linear-gradient(#93989d, #777c81); border-radius: 2px; display: flex; align-items: center; justify-content: center; }
.tb.on { background: #eceded; }
.s1 { margin-left: 5px; }
.s2 { margin-left: 4px; }
.s3 { margin-left: 5px; }
.t-disp { background: #050607; flex: none; display: flex; flex-direction: column; border-radius: 2px; }
.t-line { flex: 1; text-align: right; font-size: 11.800px; line-height: 25px; padding-right: 5px; font-family: "Liberation Sans", sans-serif; font-weight: 700; letter-spacing: .6px; white-space: pre; }
.t-line + .t-line { border-top: 1px solid #2c3136; }
.d-loc { width: 90px; margin-left: 1px; }
.d-tempo { width: 53px; margin-left: 1px; }
.d-tempo .t-line { font-size: 11px; letter-spacing: .4px; padding-right: 5px; }
.t-main { width: 229px; margin-left: 7px; flex: none; background: #050607; border-radius: 3px; display: flex; flex-direction: column; }
.t-top { height: 25px; display: flex; align-items: center; font-family: "Liberation Sans", sans-serif; font-weight: 700; letter-spacing: .5px; }
.t-pos { width: 129px; text-align: right; font-size: 12.800px; padding-right: 2px; border-right: 1px solid #33383d; letter-spacing: 1.400px; }
.t-time { flex: 1; text-align: right; font-size: 10.500px; padding-right: 4px; }
.t-btns { flex: 1; display: flex; border: 1px solid #80868c; border-radius: 4px; padding: 1px 2px; background: #14171a; }
.tbt { display: flex; align-items: center; justify-content: center; background: linear-gradient(#b9bcbf, #8b8e92); color: #2b2e31; border-right: 1px solid #66696c; height: 100%; flex: none; }
.b16 { width: 16px; } .b32 { width: 32px; }
.tbt:last-child { border-right: 0; flex: 1; }
.t-m2 { width: 14px; margin-left: 7px; flex: none; background: #060708; border-radius: 2px; position: relative; }
.bar { position: absolute; left: 6px; width: 3px; top: 18px; bottom: 2px; background: linear-gradient(#40d8a4, #20bfdc); }
.t-m3 { width: 34px; margin-left: 3px; flex: none; background: #060708; border-radius: 2px; display: flex; justify-content: space-around; padding: 2px; }
.m3-ch { width: 13px; display: flex; flex-direction: column; }
.m3-red { height: 10px; background: #ee1c24; flex: none; }
.m3-bars { flex: 1; margin-top: 5px; display: flex; justify-content: space-between; }
.m3-bars i { width: 5px; background: linear-gradient(#40d8a4, #20bfdc); }
.m3-bars.hi { margin-top: 3px; }
.m3-bars.hi i { background: linear-gradient(#d9c65a 0 3px, #40d8a4 3px, #20bfdc); }
.t-knob { width: 9px; margin-left: 4px; flex: none; background: #16191c; border-radius: 5px; position: relative; }
.t-knob span { position: absolute; left: 2px; top: 10px; width: 5px; height: 5px; border-radius: 50%; background: #fff; }
.x2 { padding-left: 5px; }
```
FILE: script.js
```js
var ORIGIN_X = 430, ORIGIN_Y = 81;
var BAR = 44.2, BAR0 = 445.4;
function barX(n) { return BAR0 + (n - 65) * BAR; }

/* ---- track list ---- */
var tracks = [
  [1, "INTEGRA-7 Editor Ve...01", "i", 0, "e-keys"],
  [2, "Akcent - Przez Twe ...ŚĆ", "a", 1, "e"],
  [3, "BrightGrand", "m", 0, "1", "tick"],
  [4, "Vox Key", "m", 0, "5", "tick"],
  [5, "Detune Bs 2", "m", 0, "2", "full"],
  [6, "Slow Pad 2", "m", 0, "3", "small"],
  [7, "Trance Saw", "m", 0, "4", "full"],
  [8, "Comp'Steel", "m", 1, "6"],
  [9, "Comp'Steel", "a", 0, "e", "half"],
  [10, "Kick", "a", 0, "e", "fulld"],
  [11, "Snare", "a", 0, "e", "fulld"],
  [12, "Shaker", "m", 1, "10"],
  [13, "Shaker", "a", 0, "e", "half"],
  [14, "Break", "a", 0, "e", "tick"]
];
function use(id, w, h) { return '<svg width="' + w + '" height="' + h + '"><use href="#' + id + '"/></svg>'; }
var html = "";
tracks.forEach(function (t) {
  var icon = t[2] === "i" ? use("i-keys", 12, 12) : t[2] === "a" ? use("i-audio", 11, 11) : use("i-midi", 11, 11);
  var g2;
  if (t[4] === "e-keys") g2 = use("i-e", 11, 11) + use("i-bars", 11, 11);
  else if (t[4] === "e") g2 = use("i-e", 11, 11) + use("i-link", 10, 8);
  else g2 = use("i-grid", 9, 9) + '<span class="n">' + t[4] + "</span>";
  var m = "";
  if (t[5] === "tick") m = '<span class="mt-tick"></span>';
  if (t[5] === "full") m = '<span class="mt-tick"></span><span class="mt-fill full"></span>';
  if (t[5] === "fulld") m = '<span class="mt-fill full dbl"></span>';
  if (t[5] === "small") m = '<span class="mt-tick"></span><span class="mt-fill small"></span>';
  if (t[5] === "half") m = '<span class="mt-tick"></span><span class="mt-fill half dbl"></span>';
  html += '<div class="track' + (t[0] === 1 ? " sel" : "") + '">' +
    '<div class="strip' + (t[0] === 5 ? " cy" : "") + '">' + icon + '<span class="num">' + t[0] + "</span></div>" +
    '<div class="tbody"><div class="r-a"><span class="ms' + (t[3] ? " yel" : "") + '">m</span><span class="ms">S</span><span class="name">' + t[1] + "</span></div>" +
    '<div class="r-b"><span class="g' + (t[0] === 1 ? " rr" : "") + '">' + use("i-rec", 10, 10) + use("i-spk", 9, 9) + "</span>" +
    '<span class="g">' + g2 + "</span>" +
    '<span class="g"><span>R</span><span>W</span></span>' +
    '<span class="g lane">' + use("i-lane", 13, 7) + "</span></div></div>" +
    '<div class="meter">' + m + "</div></div>";
});
document.getElementById("tracks").innerHTML = html;

/* ---- ruler ---- */
var ruler = document.getElementById("ruler"), rh = "";
for (var b = 65; b <= 83; b++) {
  var x = barX(b) - ORIGIN_X;
  rh += '<span class="bar-l" style="left:' + x + 'px"></span><span class="bar-n" style="left:' + (x + 4) + 'px">' + b + "</span>";
}
ruler.innerHTML = rh;

/* ---- events ---- */
var lanes = document.getElementById("lanes");
function addEvent(cls, x0, x1, y0, y1, label, inner) {
  var d = document.createElement("div");
  d.className = "ev " + cls;
  d.style.left = (x0 - ORIGIN_X) + "px";
  d.style.top = (y0 - ORIGIN_Y) + "px";
  d.style.width = (x1 - x0) + "px";
  d.style.height = (y1 - y0) + "px";
  var h = label ? '<span class="ev-t">' + label + "</span>" : "";
  (inner || []).forEach(function (n) {
    h += '<span class="' + (n.c || "nt") + '" style="left:' + (n.x - x0) + "px;top:" + (n.y - y0) + "px;width:" + n.w + "px;height:" + n.h + 'px"></span>';
  });
  d.innerHTML = h;
  lanes.appendChild(d);
  return d;
}
function dots(a, x0, x1, y, count, h) {
  var step = (x1 - x0) / count;
  for (var i = 0; i < count; i++) a.push({ x: x0 + i * step, y: y, w: step * 0.6, h: h || 2 });
  return a;
}
function lines(a, x0, x1, ys, thick) {
  ys.forEach(function (y, i) { a.push({ x: x0, y: y, w: x1 - x0, h: (thick && i === 0) ? 4 : 2 }); });
  return a;
}
function chord(a, x, y, thick, noShort) {
  var h = thick ? 4 : 2, ys = thick ? [y, y + 6] : [y, y + 3.5, y + 7];
  ys.forEach(function (yy, i) {
    var hh = (thick && i === 1) ? 2 : h;
    a.push({ x: x, y: yy, w: 10, h: hh });
    if (!noShort) a.push({ x: x + 11.5, y: yy, w: 3, h: hh });
  });
}
function inRange(list, a, b) { return list.filter(function (n) { return n.x >= a && n.x < b; }); }

/* audio track 2 */
(function () {
  var d = addEvent("wave", 430, 1280, 134, 167);
  var seed = 7;
  function r() { seed = (seed * 16807) % 2147483647; return seed / 2147483647; }
  var top = [], bot = [], midT = [], midB = [], x;
  for (x = 0; x <= 850; x += 1.5) {
    var big = (x > 467 && x < 483) ? 1 : 0;
    var a = r(), env = Math.abs(Math.sin(x / 5.3));
    top.push(x + " " + (3 + a * 3.5 + big * 4).toFixed(1));
    bot.push(x + " " + (30 - a * 4.5 * env - big * 3).toFixed(1));
    var gap = Math.sin(x / 41) > 0.9;
    var m = big ? 4 : (gap ? 0.5 : 0.6 + env * r() * 3.6);
    midT.push(x + " " + (16.5 - m).toFixed(1));
    midB.unshift(x + " " + (16.5 + m).toFixed(1));
  }
  d.innerHTML = '<svg width="850" height="33" viewBox="0 0 850 33">' +
    '<path d="M0 2L' + top.join("L") + 'L850 2Z" fill="#6f7b88"/>' +
    '<path d="M0 33L' + bot.join("L") + 'L850 33Z" fill="#525e6b"/>' +
    '<path d="M' + midT.join("L") + "L" + midB.join("L") + 'Z" fill="#c6ccd2" stroke="#3f4a56" stroke-width=".6"/>' +
    '<path d="M' + top.join("L") + '" fill="none" stroke="#c9d0d6" stroke-width="1"/>' +
    '<path d="M' + bot.join("L") + '" fill="none" stroke="#d0d5da" stroke-width="1"/>' +
    "</svg>";
})();

/* track 5 MG Bs 24 */
var n5 = [];
dots(n5, 451, 485, 260.500, 5, 3);
dots(n5, 540, 576, 246, 5, 3);
dots(n5, 495, 532, 256, 5, 3);
dots(n5, 628, 666, 251.500, 5);
dots(n5, 672, 711, 258.500, 5);
dots(n5, 712, 734, 253, 3);
dots(n5, 738, 755, 249, 2);
dots(n5, 805, 843, 260.500, 5, 3);
n5.push({ x: 888, y: 256.500, w: 22, h: 2 });
[[400.800, 489.200], [489.200, 578], [578, 755.300], [755.300, 843.700], [843.700, 932.500]].forEach(function (e) {
  addEvent("teal", e[0], e[1], 240, 272, "MG Bs 24", inRange(n5, e[0], e[1]));
});
var r5 = [];
dots(r5, 982, 1020, 246, 5, 3);
dots(r5, 1026, 1109, 260.500, 10, 3);
dots(r5, 1159, 1198, 250, 5, 3);
dots(r5, 1204, 1242, 264, 5, 3);
dots(r5, 1248, 1286, 256, 5, 3);
[[932.500, 1109.500], [1109.500, 1290]].forEach(function (e) {
  addEvent("red", e[0], e[1], 240, 272, "MG Bs 24", inRange(r5, e[0], e[1]));
});

/* track 6 MIDI 01 */
var n6 = [];
lines(n6, 430, 443, [292]);
lines(n6, 445, 487, [288.500, 292, 296.500]);
lines(n6, 491, 532, [290, 293, 297.500]);
lines(n6, 534, 576, [284.500, 288.500, 292.500]);
lines(n6, 580, 620, [292]);
lines(n6, 622, 664, [288.500, 292, 296.500]);
lines(n6, 669, 708, [289, 293.500], true);
lines(n6, 710, 731, [284.500, 288.500, 292.500]);
lines(n6, 733, 753, [287, 292.500], true);
lines(n6, 757, 797, [292]);
lines(n6, 799, 842, [288.500, 292, 296.500]);
lines(n6, 845, 886, [290, 293, 297.500]);
lines(n6, 888, 910, [284.500, 288.500, 292.500]);
[[400.800, 489.200], [489.200, 578], [578, 666.600], [666.600, 755.300], [755.300, 843.700], [843.700, 932.500]].forEach(function (e) {
  addEvent("teal", e[0], e[1], 275, 307, "MIDI 01", inRange(n6, e[0], e[1]));
});
var r6 = [];
lines(r6, 934, 974, [291.500]);
lines(r6, 976, 1019, [284.500, 288.500, 292]);
lines(r6, 1021, 1063, [288.500, 292.500, 296.500]);
lines(r6, 1064, 1108, [288.500, 292.500, 296.500]);
lines(r6, 1111, 1151, [293.500]);
lines(r6, 1154, 1196, [287, 293.500], true);
lines(r6, 1198, 1240, [284.500, 288.500, 293.500]);
lines(r6, 1242, 1286, [287, 293.500], true);
[[932.500, 1109.500], [1109.500, 1290]].forEach(function (e) {
  addEvent("red", e[0], e[1], 275, 307, "MIDI 01", inRange(r6, e[0], e[1]));
});

/* track 7 chords */
var n7 = [];
[[0, 570], [65, 582], [127, 582], [197, 584], [260, 584], [330, 570], [392, 570], [465, 570], [525, 570], [596, 582], [658, 582], [730, 576, 1], [792, 576, 1], [862, 570], [922, 576, 1], [995, 570], [1060, 570], [1128, 582], [1190, 582], [1262, 584], [1322, 584], [1392, 570, 0, 1]].forEach(function (c) {
  chord(n7, 430 + c[0] / 3, 130 + c[1] / 3, c[2], c[3]);
});
addEvent("teal", 300, 932.500, 311, 342, "", n7);
var r7 = [];
r7.push({ x: 939, y: 327.500, w: 8, h: 2 }, { x: 949, y: 327.500, w: 4, h: 2 }, { x: 959, y: 327.500, w: 9, h: 2 }, { x: 970, y: 327.500, w: 4, h: 2 });
[[248, 320], [312, 320], [382, 324], [445, 324], [517, 324], [578, 324], [647, 322, 1], [712, 322, 1], [782, 322, 1], [845, 322, 1], [915, 320], [975, 320], [1047, 322, 1], [1110, 322, 1]].forEach(function (c) {
  chord(r7, 900 + c[0] / 3, c[1], c[2]);
});
addEvent("red", 932.500, 1290, 311, 342, "MIDI 01", r7);

/* track 8 */
var n8 = [];
function nn(a, x, y, w) { a.push({ x: x, y: y, w: w, h: 2 }); }
[[643, 359.500, 5], [654, 359.500, 7], [665, 362.500, 47], [642, 367.500, 4], [653, 367.500, 4], [664, 367.500, 4],
 [732, 359.500, 6], [743, 359.500, 7], [754, 362.500, 47], [731, 367.500, 4], [742, 367.500, 4], [753, 367.500, 4],
 [814, 362.500, 4], [821, 361.500, 6], [827, 360, 6], [833, 361.500, 5], [839, 363, 5], [844, 363, 39], [888, 362.500, 44]].forEach(function (n) { nn(n8, n[0], n[1], n[2]); });
addEvent("gray", 578.600, 932.500, 346, 377, "Comp'Steel", n8);

/* track 9 */
var n9 = [
  { x: 688, y: 389, w: 244, h: 1, c: "ln" },
  { x: 580, y: 404.500, w: 352, h: 2, c: "ln" }
];
[734, 745, 756, 816, 825, 833, 846, 891].forEach(function (x) { n9.push({ x: x, y: 387.500, w: 5, h: 4, c: "dm" }); });
[642, 654, 665, 734, 745, 756, 816, 825, 834, 846, 891].forEach(function (x) { n9.push({ x: x, y: 403.500, w: 5, h: 4, c: "dm" }); });
addEvent("gray", 578.600, 932.500, 381, 412, "Take 1 (Comp'Steel_01)", n9);

/* repeating audio tracks */
function audioRow(y0, y1, label, kind, lastSmall, stopAt) {
  var ranges = [];
  for (var b = 64; b <= 74; b++) ranges.push([barX(b), barX(b + 1)]);
  ranges[ranges.length - 1][1] = stopAt;
  for (b = 76; b <= 83; b++) ranges.push([barX(b), barX(b + 1)]);
  if (lastSmall) ranges.push([888.900, 898.500]);
  ranges.forEach(function (e) {
    var inner = [], i;
    if (kind === "four") for (i = 0; i < 4; i++) inner.push({ x: e[0] + 2 + i * 11.600, y: y0 + 16, w: 5, h: 11, c: "mk" });
    if (kind === "two") for (i = 0; i < 2; i++) inner.push({ x: e[0] + 14 + i * 22, y: y0 + 16, w: 5, h: 11, c: "mk" });
    if (kind === "take") {
      inner.push({ x: e[0] + 2, y: y0 + 24, w: 40, h: 1.500, c: "ln" });
      [9, 18, 31].forEach(function (o) { inner.push({ x: e[0] + o, y: y0 + 22.500, w: 5, h: 4, c: "dm" }); });
    }
    var w = e[1] - e[0];
    var small = w < 20;
    if (small) inner = inner.slice(0, 1);
    addEvent("gray", e[0], e[1], y0, y1, small ? "" : label, inner);
  });
}
audioRow(417, 448, "Audio 01", "four", true, 888.400);
audioRow(452, 483, "Audio 01", "two", false, 887.500);
audioRow(522, 554, "Take 1 (S", "take", false, 887.500);
```
